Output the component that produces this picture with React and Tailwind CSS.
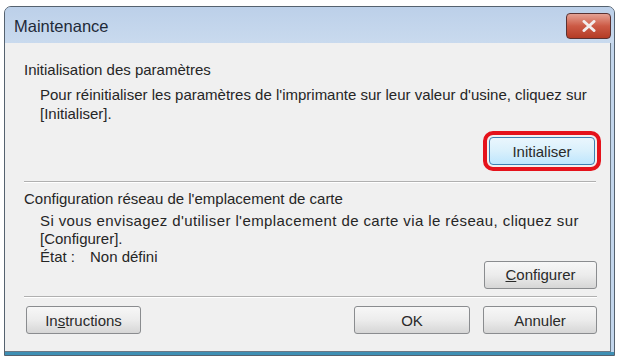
import React from "react";

function Btn({ children, className = "", w = "w-[115px]" }) {
  return (
    <div
      className={`${w} h-[28px] flex items-center justify-center rounded-[3px] border border-[#8a8c8f] bg-gradient-to-b from-[#f7f7f7] via-[#ececec] to-[#d6d6d6] text-[#2a2a2a] ${className}`}
    >
      {children}
    </div>
  );
}

export default function App() {
  return (
    <div
      className="w-[620px] h-[362px] bg-white pt-[6px] pl-[4px]"
      style={{ fontFamily: '"Liberation Sans", Arial, sans-serif' }}
    >
      <div className="w-[611px] h-[350px] flex flex-col rounded-t-[7px] border border-[#55626f] bg-[#bfd3ea] overflow-hidden">
        {/* Title bar */}
        <div className="h-[36px] flex items-start justify-between bg-gradient-to-b from-[#bcd0e9] to-[#c9daee] pl-[9px] pr-[3px]">
          <div className="mt-[9px] text-[16.5px] leading-[20px] text-[#1e2a38]">Maintenance</div>
          <div className="mt-[6px] w-[45px] h-[26px] rounded-[4px] border border-[#5a3232] bg-gradient-to-b from-[#e4a194] via-[#cc5a45] to-[#b43b25] flex items-center justify-center">
            <svg width="14" height="12" viewBox="0 0 14 12">
              <path d="M2 1.5 L12 10.5 M12 1.5 L2 10.5" stroke="#f2eded" strokeWidth="3" strokeLinecap="round" />
            </svg>
          </div>
        </div>
        {/* Body */}
        <div className="flex-1 flex">
          <div className="flex-1 flex flex-col bg-[#f0f0f0] border-r border-[#6b7885] border-b pl-[19px] pr-[13px] pt-[17px] text-[15px] leading-[19px] text-[#262626]">
            <div>Initialisation des paramètres</div>
            <div className="mt-[6px] pl-[16px]">
              <div>Pour réinitialiser les paramètres de l'imprimante sur leur valeur d'usine, cliquez sur</div>
              <div>[Initialiser].</div>
            </div>
            <div className="flex justify-end mt-[14px] pr-[2px]">
              <Btn
                w="w-[106px]"
                className="!border-[#3c7fb1] !from-[#eaf6fd] !via-[#d9f0fc] !to-[#bee6fd] outline-[4px] outline-solid outline-[#e5121b] outline-offset-[2px] !rounded-[4px]"
              >
                Initialiser
              </Btn>
            </div>
            <div className="mt-[16px] mr-[1px] h-[2px] border-t border-[#b0b0b0] border-b border-b-white" />
            <div className="mt-[6px]">Configuration réseau de l'emplacement de carte</div>
            <div className="mt-[4px] pl-[16px] leading-[18px]">
              <div className="tracking-[0.4px]">Si vous envisagez d'utiliser l'emplacement de carte via le réseau, cliquez sur</div>
              <div>[Configurer].</div>
            </div>
            <div className="flex justify-between items-start pl-[16px] leading-[18px]">
              <div className="flex">
                <span className="w-[50px]">État :</span>
                <span>Non défini</span>
              </div>
              <Btn w="w-[113px]" className="mt-[13px]">
                <span><span className="underline">C</span>onfigurer</span>
              </Btn>
            </div>
            <div className="mt-[7px] h-[2px] border-t border-[#b0b0b0] border-b border-b-white" />
            <div className="mt-[8px] flex items-center">
              <Btn w="w-[115px]" className="ml-[2px]">
                <span>In<span className="underline">s</span>tructions</span>
              </Btn>
              <div className="flex-1" />
              <Btn w="w-[116px]">OK</Btn>
              <Btn w="w-[114px]" className="ml-[13px]">Annuler</Btn>
            </div>
          </div>
          <div className="w-[3px] bg-[#c3d6ec]" />
        </div>
        <div className="h-[3px] bg-[#3e8fb4]" />
      </div>
    </div>
  );
}
